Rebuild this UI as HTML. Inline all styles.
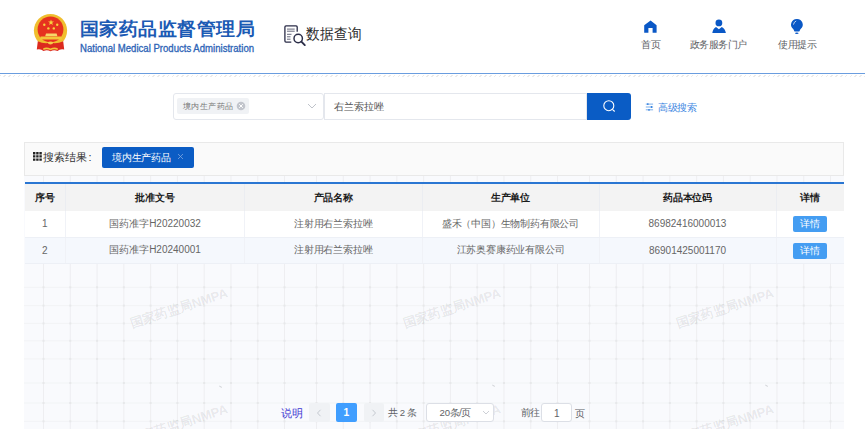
<!DOCTYPE html>
<html><head><meta charset="utf-8">
<style>
*{margin:0;padding:0;box-sizing:border-box}
html,body{width:865px;height:429px;overflow:hidden;background:#fff;font-family:"Liberation Sans",sans-serif;color:#606266}
.a{position:absolute;white-space:nowrap}
.hdr-line{position:absolute;left:0;top:72.6px;width:865px;height:1px;background:#6a9ddf}
.hatch{position:absolute;left:0;top:74.6px;width:865px;height:2.4px;background:repeating-linear-gradient(135deg,#ebebeb 0 1.1px,#fff 1.1px 3.4px)}
.title{left:79.5px;top:16.8px;font-size:19px;letter-spacing:0.55px;font-weight:bold;color:#1b5ab4;transform:scaleY(0.95);transform-origin:0 0}
.sub{left:80px;top:42.5px;font-size:10.3px;color:#2c63b6;transform-origin:0 0;transform:scaleX(0.93);-webkit-text-stroke:0.3px #2c63b6}
.nav{font-size:10px;color:#606266}
.grid{position:absolute;left:24px;top:176px;width:820px;height:253px;background-color:#f8f9fc;
 background-image:linear-gradient(to right,#eef0f3 1px,transparent 1px),linear-gradient(to bottom,#f0f1f4 1px,transparent 1px);
 background-size:26.8px 17.75px;background-position:19.3px 5.8px}
.wm{position:absolute;width:100px;height:16px;line-height:16px;text-align:center;font-size:12.9px;font-weight:bold;color:rgba(0,0,0,0.085);transform:rotate(-18deg);white-space:nowrap}
table{position:absolute;left:24.5px;top:183.5px;width:819.5px;border-collapse:collapse;font-size:10px;table-layout:fixed}
th{height:27.5px;padding-top:1.8px;letter-spacing:-0.2px;background:#f3f3f3;color:#1a1a1a;font-weight:bold;border-right:1px solid #ebedf1;text-align:center}
td{height:26.3px;text-align:center;color:#666;border-right:1px solid #f0f2f7;border-bottom:1px solid #edf0f6}
th:last-child,td:last-child{border-right:none}
tr.r2 td{background:#f5f8fd}
td:nth-child(3),td:nth-child(4){letter-spacing:-0.2px}
tr.r2 .btn{position:relative;top:0.7px}
.btn{margin-left:-1px}
tr.r1 td{background:#fff}
.btn{display:inline-block;width:34px;height:16px;line-height:16px;background:#449df2;color:#fff;border-radius:2px;font-size:10px;vertical-align:middle}
</style></head><body>

<!-- header -->
<svg class="a" style="left:32px;top:12px" width="38" height="41" viewBox="32 12 38 41">
 <circle cx="50.5" cy="30.6" r="16.6" fill="#f0be2e"/>
 <circle cx="50.5" cy="29.4" r="12.9" fill="#e6321f"/>
 <path d="M51 19.4 l0.75 2.05 2.2 0 -1.75 1.35 .65 2.1 -1.85 -1.25 -1.85 1.25 .65 -2.1 -1.75 -1.35 2.2 0z" fill="#f7d33e"/>
 <circle cx="44.3" cy="24.7" r="1.2" fill="#f7d33e"/>
 <circle cx="57.2" cy="24.7" r="1.2" fill="#f7d33e"/>
 <circle cx="48.4" cy="28.4" r="1.2" fill="#f7d33e"/>
 <circle cx="53.8" cy="28.4" r="1.2" fill="#f7d33e"/>
 <path d="M46 33.4 H56.6 L57.4 36.2 H45.2 Z" fill="#f6d66a"/>
 <path d="M40.6 36.6 H61.4 L62.2 39.4 H39.8 Z" fill="#f3c53a"/>
 <path d="M37.8 41.2 Q44 44.2 50.5 42.6 Q57 44.2 63.2 41.2 L64.2 49.5 Q60 48.6 57.5 51 Q54 49.6 50.5 51.2 Q47 49.6 43.5 51 Q41 48.6 36.8 49.5 Z" fill="#dc2a1e"/>
 <path d="M47.4 42.6 Q50.5 40.4 53.6 42.6 Q52.6 44.6 50.5 44.6 Q48.4 44.6 47.4 42.6Z" fill="#f5cc4a"/>
 <path d="M43 48.4 Q46.5 46.6 50.5 48.6 Q54.5 46.6 58 48.4 L57.5 50 Q54 48.6 50.5 50.2 Q47 48.6 43.5 50Z" fill="#f3c53a"/>
</svg>
<div class="a title">国家药品监督管理局</div>
<div class="a sub">National Medical Products Administration</div>

<svg class="a" style="left:283px;top:24px" width="24" height="23" viewBox="283 24 24 23">
 <path d="M297.2 31.8 V27 Q297.2 25.9 296.1 25.9 H286 Q284.9 25.9 284.9 27 V41 Q284.9 42.1 286 42.1 H291.3" fill="none" stroke="#2b2d48" stroke-width="1.3"/>
 <path d="M287 29.1 H294.7 M287 31.2 H294.7 M287 34.3 H291.5 M287 36.8 H290.5 M287 39.2 H290.5" stroke="#55576c" stroke-width="0.9"/>
 <circle cx="298.2" cy="38.5" r="4.2" fill="none" stroke="#2b2d48" stroke-width="1.45"/>
 <path d="M301.4 41.7 L304.8 45.1" stroke="#2b2d48" stroke-width="1.9" stroke-linecap="round"/>
</svg>
<div class="a" style="left:306px;top:24.5px;font-size:14px;letter-spacing:0.15px;color:#2a2a2a;transform:scaleY(1.1);transform-origin:0 0">数据查询</div>

<svg class="a" style="left:640px;top:18px" width="180" height="18" viewBox="640 18 180 18">
 <path d="M650.6 20.4 L656.6 25.3 V32.7 H652.6 V28.1 H648.4 V32.7 H644.2 V25.3 Z" fill="#0a58c6"/>
 <circle cx="718.9" cy="22.9" r="3.4" fill="#0a58c6"/>
 <path d="M712.3 33 Q713 28.5 716 27 L718.9 29.3 L721.8 27 Q725 28.5 725.9 33 Z" fill="#0a58c6"/>
 <path d="M796.9 19 A5.7 5.7 0 0 1 800.4 29.3 L799.3 31.6 H794.5 L793.4 29.3 A5.7 5.7 0 0 1 796.9 19Z" fill="#0a58c6"/>
 <ellipse cx="796.8" cy="33.3" rx="1.8" ry="0.7" fill="#0a58c6"/>
 <path d="M793.5 24.6 Q793.8 22 796.2 21" stroke="#fff" stroke-width="0.8" fill="none" opacity="0.9"/>
</svg>
<div class="a nav" style="left:641px;top:38px">首页</div>
<div class="a nav" style="left:690px;top:38px;letter-spacing:-0.55px">政务服务门户</div>
<div class="a nav" style="left:778px;top:38px;letter-spacing:-0.3px">使用提示</div>

<div class="hdr-line"></div>
<div class="hatch"></div>

<!-- search -->
<div class="a" style="left:173px;top:93px;width:151px;height:26.5px;border:1px solid #e4e7ed;border-radius:3px;background:#fff"></div>
<div class="a" style="left:177px;top:98px;width:72px;height:15.5px;background:#f0f2f5;border-radius:2px"></div>
<div class="a" style="left:182.5px;top:101.2px;font-size:8px;transform:scale(1.05);transform-origin:0 0;color:#777">境内生产药品</div>
<svg class="a" style="left:236px;top:100.5px" width="10" height="10" viewBox="0 0 10 10">
 <circle cx="5" cy="5" r="4.3" fill="#c2c5cc"/>
 <path d="M3.2 3.2 L6.8 6.8 M6.8 3.2 L3.2 6.8" stroke="#fff" stroke-width="1"/>
</svg>
<svg class="a" style="left:307px;top:103px" width="10" height="6" viewBox="0 0 10 6">
 <path d="M1 1 L5 5 L9 1" fill="none" stroke="#b8bcc4" stroke-width="0.9"/>
</svg>
<div class="a" style="left:324px;top:93px;width:263px;height:26.5px;border:1px solid #e4e7ed;border-left-color:#e4e7ed;background:#fff"></div>
<div class="a" style="left:334px;top:99.5px;font-size:10px;color:#555">右兰索拉唑</div>
<div class="a" style="left:587px;top:93px;width:43.5px;height:26.5px;background:#0a5cc5;border-radius:0 3px 3px 0"></div>
<svg class="a" style="left:600px;top:97px" width="18" height="18" viewBox="600 97 18 18">
 <circle cx="608.8" cy="105.7" r="5" fill="none" stroke="#fff" stroke-width="1.1"/>
 <path d="M612.4 109.3 L614.7 111.5" stroke="#fff" stroke-width="1.1"/>
</svg>
<svg class="a" style="left:644px;top:102px" width="11" height="10" viewBox="644 102 11 10">
 <path d="M645.8 104.1 H653.1 M645.8 107 H653.1 M645.8 109.8 H653.1" stroke="#5a9ae6" stroke-width="0.8"/>
 <path d="M647.8 103.2 V105 M651.5 106.1 V107.9 M649 108.9 V110.7" stroke="#3b86e0" stroke-width="1.4"/>
</svg>
<div class="a" style="left:658px;top:100.5px;font-size:10px;letter-spacing:-0.35px;color:#3f88e2">高级搜索</div>

<!-- results bar -->
<div class="a" style="left:24px;top:142px;width:820px;height:34px;background:#fafafa;border:1px solid #e9e9e9"></div>
<svg class="a" style="left:33px;top:152px" width="9" height="9" viewBox="0 0 9 9">
 <path d="M0 0h2.4v2.4H0z M3.2 0h2.4v2.4H3.2z M6.4 0h2.4v2.4H6.4z M0 3.2h2.4v2.4H0z M3.2 3.2h2.4v2.4H3.2z M6.4 3.2h2.4v2.4H6.4z M0 6.4h2.4v2.4H0z M3.2 6.4h2.4v2.4H3.2z M6.4 6.4h2.4v2.4H6.4z" fill="#222"/>
</svg>
<div class="a" style="left:43px;top:151px;font-size:10.8px;color:#333">搜索结果<span style="margin-left:1.5px">:</span></div>
<div class="a" style="left:101.5px;top:147px;width:92px;height:21px;background:#0b5cc4;border-radius:2px"></div>
<div class="a" style="left:112px;top:151.5px;font-size:9.6px;letter-spacing:-0.25px;color:#fff">境内生产药品</div>
<svg class="a" style="left:177px;top:152.5px" width="7" height="7" viewBox="0 0 7 7">
 <path d="M1 1 L6 6 M6 1 L1 6" stroke="#7fa6e0" stroke-width="0.8"/>
</svg>

<!-- grid bg -->
<svg class="a" style="left:24px;top:176px" width="820" height="253" viewBox="0 0 820 253"><rect x="0" y="0" width="820" height="253" fill="#f9fafd"/><rect x="19.00" y="0" width="1" height="253" fill="#eeeef1"/><rect x="45.78" y="0" width="1" height="253" fill="#eeeef1"/><rect x="72.56" y="0" width="1" height="253" fill="#eeeef1"/><rect x="99.34" y="0" width="1" height="253" fill="#eeeef1"/><rect x="126.12" y="0" width="1" height="253" fill="#eeeef1"/><rect x="152.90" y="0" width="1" height="253" fill="#eeeef1"/><rect x="179.68" y="0" width="1" height="253" fill="#eeeef1"/><rect x="206.46" y="0" width="1" height="253" fill="#eeeef1"/><rect x="233.24" y="0" width="1" height="253" fill="#eeeef1"/><rect x="260.02" y="0" width="1" height="253" fill="#eeeef1"/><rect x="292.00" y="0" width="1" height="253" fill="#eeeef1"/><rect x="318.78" y="0" width="1" height="253" fill="#eeeef1"/><rect x="345.56" y="0" width="1" height="253" fill="#eeeef1"/><rect x="372.34" y="0" width="1" height="253" fill="#eeeef1"/><rect x="399.12" y="0" width="1" height="253" fill="#eeeef1"/><rect x="425.90" y="0" width="1" height="253" fill="#eeeef1"/><rect x="452.68" y="0" width="1" height="253" fill="#eeeef1"/><rect x="479.46" y="0" width="1" height="253" fill="#eeeef1"/><rect x="506.24" y="0" width="1" height="253" fill="#eeeef1"/><rect x="533.02" y="0" width="1" height="253" fill="#eeeef1"/><rect x="565.00" y="0" width="1" height="253" fill="#eeeef1"/><rect x="591.78" y="0" width="1" height="253" fill="#eeeef1"/><rect x="618.56" y="0" width="1" height="253" fill="#eeeef1"/><rect x="645.34" y="0" width="1" height="253" fill="#eeeef1"/><rect x="672.12" y="0" width="1" height="253" fill="#eeeef1"/><rect x="698.90" y="0" width="1" height="253" fill="#eeeef1"/><rect x="725.68" y="0" width="1" height="253" fill="#eeeef1"/><rect x="752.46" y="0" width="1" height="253" fill="#eeeef1"/><rect x="779.24" y="0" width="1" height="253" fill="#eeeef1"/><rect x="806.02" y="0" width="1" height="253" fill="#eeeef1"/><rect x="0" y="110.80" width="820" height="1" fill="#f2f3f5"/><rect x="0" y="129.10" width="820" height="1" fill="#f2f3f5"/><rect x="0" y="146.90" width="820" height="1" fill="#f2f3f5"/><rect x="0" y="164.30" width="820" height="1" fill="#f2f3f5"/><rect x="0" y="182.40" width="820" height="1" fill="#f2f3f5"/><rect x="0" y="206.50" width="820" height="1" fill="#f2f3f5"/><rect x="0" y="226.50" width="820" height="1" fill="#f2f3f5"/><rect x="0" y="244.80" width="820" height="1" fill="#f2f3f5"/><rect x="18.50" y="110.30" width="2" height="2" fill="#e7e8ea"/><rect x="18.50" y="128.60" width="2" height="2" fill="#e7e8ea"/><rect x="18.50" y="146.40" width="2" height="2" fill="#e7e8ea"/><rect x="18.50" y="163.80" width="2" height="2" fill="#e7e8ea"/><rect x="18.50" y="181.90" width="2" height="2" fill="#e7e8ea"/><rect x="18.50" y="206.00" width="2" height="2" fill="#e7e8ea"/><rect x="18.50" y="226.00" width="2" height="2" fill="#e7e8ea"/><rect x="18.50" y="244.30" width="2" height="2" fill="#e7e8ea"/><rect x="45.28" y="110.30" width="2" height="2" fill="#e7e8ea"/><rect x="45.28" y="128.60" width="2" height="2" fill="#e7e8ea"/><rect x="45.28" y="146.40" width="2" height="2" fill="#e7e8ea"/><rect x="45.28" y="163.80" width="2" height="2" fill="#e7e8ea"/><rect x="45.28" y="181.90" width="2" height="2" fill="#e7e8ea"/><rect x="45.28" y="206.00" width="2" height="2" fill="#e7e8ea"/><rect x="45.28" y="226.00" width="2" height="2" fill="#e7e8ea"/><rect x="45.28" y="244.30" width="2" height="2" fill="#e7e8ea"/><rect x="72.06" y="110.30" width="2" height="2" fill="#e7e8ea"/><rect x="72.06" y="128.60" width="2" height="2" fill="#e7e8ea"/><rect x="72.06" y="146.40" width="2" height="2" fill="#e7e8ea"/><rect x="72.06" y="163.80" width="2" height="2" fill="#e7e8ea"/><rect x="72.06" y="181.90" width="2" height="2" fill="#e7e8ea"/><rect x="72.06" y="206.00" width="2" height="2" fill="#e7e8ea"/><rect x="72.06" y="226.00" width="2" height="2" fill="#e7e8ea"/><rect x="72.06" y="244.30" width="2" height="2" fill="#e7e8ea"/><rect x="98.84" y="110.30" width="2" height="2" fill="#e7e8ea"/><rect x="98.84" y="128.60" width="2" height="2" fill="#e7e8ea"/><rect x="98.84" y="146.40" width="2" height="2" fill="#e7e8ea"/><rect x="98.84" y="163.80" width="2" height="2" fill="#e7e8ea"/><rect x="98.84" y="181.90" width="2" height="2" fill="#e7e8ea"/><rect x="98.84" y="206.00" width="2" height="2" fill="#e7e8ea"/><rect x="98.84" y="226.00" width="2" height="2" fill="#e7e8ea"/><rect x="98.84" y="244.30" width="2" height="2" fill="#e7e8ea"/><rect x="125.62" y="110.30" width="2" height="2" fill="#e7e8ea"/><rect x="125.62" y="128.60" width="2" height="2" fill="#e7e8ea"/><rect x="125.62" y="146.40" width="2" height="2" fill="#e7e8ea"/><rect x="125.62" y="163.80" width="2" height="2" fill="#e7e8ea"/><rect x="125.62" y="181.90" width="2" height="2" fill="#e7e8ea"/><rect x="125.62" y="206.00" width="2" height="2" fill="#e7e8ea"/><rect x="125.62" y="226.00" width="2" height="2" fill="#e7e8ea"/><rect x="125.62" y="244.30" width="2" height="2" fill="#e7e8ea"/><rect x="152.40" y="110.30" width="2" height="2" fill="#e7e8ea"/><rect x="152.40" y="128.60" width="2" height="2" fill="#e7e8ea"/><rect x="152.40" y="146.40" width="2" height="2" fill="#e7e8ea"/><rect x="152.40" y="163.80" width="2" height="2" fill="#e7e8ea"/><rect x="152.40" y="181.90" width="2" height="2" fill="#e7e8ea"/><rect x="152.40" y="206.00" width="2" height="2" fill="#e7e8ea"/><rect x="152.40" y="226.00" width="2" height="2" fill="#e7e8ea"/><rect x="152.40" y="244.30" width="2" height="2" fill="#e7e8ea"/><rect x="179.18" y="110.30" width="2" height="2" fill="#e7e8ea"/><rect x="179.18" y="128.60" width="2" height="2" fill="#e7e8ea"/><rect x="179.18" y="146.40" width="2" height="2" fill="#e7e8ea"/><rect x="179.18" y="163.80" width="2" height="2" fill="#e7e8ea"/><rect x="179.18" y="181.90" width="2" height="2" fill="#e7e8ea"/><rect x="179.18" y="206.00" width="2" height="2" fill="#e7e8ea"/><rect x="179.18" y="226.00" width="2" height="2" fill="#e7e8ea"/><rect x="179.18" y="244.30" width="2" height="2" fill="#e7e8ea"/><rect x="205.96" y="110.30" width="2" height="2" fill="#e7e8ea"/><rect x="205.96" y="128.60" width="2" height="2" fill="#e7e8ea"/><rect x="205.96" y="146.40" width="2" height="2" fill="#e7e8ea"/><rect x="205.96" y="163.80" width="2" height="2" fill="#e7e8ea"/><rect x="205.96" y="181.90" width="2" height="2" fill="#e7e8ea"/><rect x="205.96" y="206.00" width="2" height="2" fill="#e7e8ea"/><rect x="205.96" y="226.00" width="2" height="2" fill="#e7e8ea"/><rect x="205.96" y="244.30" width="2" height="2" fill="#e7e8ea"/><rect x="232.74" y="110.30" width="2" height="2" fill="#e7e8ea"/><rect x="232.74" y="128.60" width="2" height="2" fill="#e7e8ea"/><rect x="232.74" y="146.40" width="2" height="2" fill="#e7e8ea"/><rect x="232.74" y="163.80" width="2" height="2" fill="#e7e8ea"/><rect x="232.74" y="181.90" width="2" height="2" fill="#e7e8ea"/><rect x="232.74" y="206.00" width="2" height="2" fill="#e7e8ea"/><rect x="232.74" y="226.00" width="2" height="2" fill="#e7e8ea"/><rect x="232.74" y="244.30" width="2" height="2" fill="#e7e8ea"/><rect x="259.52" y="110.30" width="2" height="2" fill="#e7e8ea"/><rect x="259.52" y="128.60" width="2" height="2" fill="#e7e8ea"/><rect x="259.52" y="146.40" width="2" height="2" fill="#e7e8ea"/><rect x="259.52" y="163.80" width="2" height="2" fill="#e7e8ea"/><rect x="259.52" y="181.90" width="2" height="2" fill="#e7e8ea"/><rect x="259.52" y="206.00" width="2" height="2" fill="#e7e8ea"/><rect x="259.52" y="226.00" width="2" height="2" fill="#e7e8ea"/><rect x="259.52" y="244.30" width="2" height="2" fill="#e7e8ea"/><rect x="291.50" y="110.30" width="2" height="2" fill="#e7e8ea"/><rect x="291.50" y="128.60" width="2" height="2" fill="#e7e8ea"/><rect x="291.50" y="146.40" width="2" height="2" fill="#e7e8ea"/><rect x="291.50" y="163.80" width="2" height="2" fill="#e7e8ea"/><rect x="291.50" y="181.90" width="2" height="2" fill="#e7e8ea"/><rect x="291.50" y="206.00" width="2" height="2" fill="#e7e8ea"/><rect x="291.50" y="226.00" width="2" height="2" fill="#e7e8ea"/><rect x="291.50" y="244.30" width="2" height="2" fill="#e7e8ea"/><rect x="318.28" y="110.30" width="2" height="2" fill="#e7e8ea"/><rect x="318.28" y="128.60" width="2" height="2" fill="#e7e8ea"/><rect x="318.28" y="146.40" width="2" height="2" fill="#e7e8ea"/><rect x="318.28" y="163.80" width="2" height="2" fill="#e7e8ea"/><rect x="318.28" y="181.90" width="2" height="2" fill="#e7e8ea"/><rect x="318.28" y="206.00" width="2" height="2" fill="#e7e8ea"/><rect x="318.28" y="226.00" width="2" height="2" fill="#e7e8ea"/><rect x="318.28" y="244.30" width="2" height="2" fill="#e7e8ea"/><rect x="345.06" y="110.30" width="2" height="2" fill="#e7e8ea"/><rect x="345.06" y="128.60" width="2" height="2" fill="#e7e8ea"/><rect x="345.06" y="146.40" width="2" height="2" fill="#e7e8ea"/><rect x="345.06" y="163.80" width="2" height="2" fill="#e7e8ea"/><rect x="345.06" y="181.90" width="2" height="2" fill="#e7e8ea"/><rect x="345.06" y="206.00" width="2" height="2" fill="#e7e8ea"/><rect x="345.06" y="226.00" width="2" height="2" fill="#e7e8ea"/><rect x="345.06" y="244.30" width="2" height="2" fill="#e7e8ea"/><rect x="371.84" y="110.30" width="2" height="2" fill="#e7e8ea"/><rect x="371.84" y="128.60" width="2" height="2" fill="#e7e8ea"/><rect x="371.84" y="146.40" width="2" height="2" fill="#e7e8ea"/><rect x="371.84" y="163.80" width="2" height="2" fill="#e7e8ea"/><rect x="371.84" y="181.90" width="2" height="2" fill="#e7e8ea"/><rect x="371.84" y="206.00" width="2" height="2" fill="#e7e8ea"/><rect x="371.84" y="226.00" width="2" height="2" fill="#e7e8ea"/><rect x="371.84" y="244.30" width="2" height="2" fill="#e7e8ea"/><rect x="398.62" y="110.30" width="2" height="2" fill="#e7e8ea"/><rect x="398.62" y="128.60" width="2" height="2" fill="#e7e8ea"/><rect x="398.62" y="146.40" width="2" height="2" fill="#e7e8ea"/><rect x="398.62" y="163.80" width="2" height="2" fill="#e7e8ea"/><rect x="398.62" y="181.90" width="2" height="2" fill="#e7e8ea"/><rect x="398.62" y="206.00" width="2" height="2" fill="#e7e8ea"/><rect x="398.62" y="226.00" width="2" height="2" fill="#e7e8ea"/><rect x="398.62" y="244.30" width="2" height="2" fill="#e7e8ea"/><rect x="425.40" y="110.30" width="2" height="2" fill="#e7e8ea"/><rect x="425.40" y="128.60" width="2" height="2" fill="#e7e8ea"/><rect x="425.40" y="146.40" width="2" height="2" fill="#e7e8ea"/><rect x="425.40" y="163.80" width="2" height="2" fill="#e7e8ea"/><rect x="425.40" y="181.90" width="2" height="2" fill="#e7e8ea"/><rect x="425.40" y="206.00" width="2" height="2" fill="#e7e8ea"/><rect x="425.40" y="226.00" width="2" height="2" fill="#e7e8ea"/><rect x="425.40" y="244.30" width="2" height="2" fill="#e7e8ea"/><rect x="452.18" y="110.30" width="2" height="2" fill="#e7e8ea"/><rect x="452.18" y="128.60" width="2" height="2" fill="#e7e8ea"/><rect x="452.18" y="146.40" width="2" height="2" fill="#e7e8ea"/><rect x="452.18" y="163.80" width="2" height="2" fill="#e7e8ea"/><rect x="452.18" y="181.90" width="2" height="2" fill="#e7e8ea"/><rect x="452.18" y="206.00" width="2" height="2" fill="#e7e8ea"/><rect x="452.18" y="226.00" width="2" height="2" fill="#e7e8ea"/><rect x="452.18" y="244.30" width="2" height="2" fill="#e7e8ea"/><rect x="478.96" y="110.30" width="2" height="2" fill="#e7e8ea"/><rect x="478.96" y="128.60" width="2" height="2" fill="#e7e8ea"/><rect x="478.96" y="146.40" width="2" height="2" fill="#e7e8ea"/><rect x="478.96" y="163.80" width="2" height="2" fill="#e7e8ea"/><rect x="478.96" y="181.90" width="2" height="2" fill="#e7e8ea"/><rect x="478.96" y="206.00" width="2" height="2" fill="#e7e8ea"/><rect x="478.96" y="226.00" width="2" height="2" fill="#e7e8ea"/><rect x="478.96" y="244.30" width="2" height="2" fill="#e7e8ea"/><rect x="505.74" y="110.30" width="2" height="2" fill="#e7e8ea"/><rect x="505.74" y="128.60" width="2" height="2" fill="#e7e8ea"/><rect x="505.74" y="146.40" width="2" height="2" fill="#e7e8ea"/><rect x="505.74" y="163.80" width="2" height="2" fill="#e7e8ea"/><rect x="505.74" y="181.90" width="2" height="2" fill="#e7e8ea"/><rect x="505.74" y="206.00" width="2" height="2" fill="#e7e8ea"/><rect x="505.74" y="226.00" width="2" height="2" fill="#e7e8ea"/><rect x="505.74" y="244.30" width="2" height="2" fill="#e7e8ea"/><rect x="532.52" y="110.30" width="2" height="2" fill="#e7e8ea"/><rect x="532.52" y="128.60" width="2" height="2" fill="#e7e8ea"/><rect x="532.52" y="146.40" width="2" height="2" fill="#e7e8ea"/><rect x="532.52" y="163.80" width="2" height="2" fill="#e7e8ea"/><rect x="532.52" y="181.90" width="2" height="2" fill="#e7e8ea"/><rect x="532.52" y="206.00" width="2" height="2" fill="#e7e8ea"/><rect x="532.52" y="226.00" width="2" height="2" fill="#e7e8ea"/><rect x="532.52" y="244.30" width="2" height="2" fill="#e7e8ea"/><rect x="564.50" y="110.30" width="2" height="2" fill="#e7e8ea"/><rect x="564.50" y="128.60" width="2" height="2" fill="#e7e8ea"/><rect x="564.50" y="146.40" width="2" height="2" fill="#e7e8ea"/><rect x="564.50" y="163.80" width="2" height="2" fill="#e7e8ea"/><rect x="564.50" y="181.90" width="2" height="2" fill="#e7e8ea"/><rect x="564.50" y="206.00" width="2" height="2" fill="#e7e8ea"/><rect x="564.50" y="226.00" width="2" height="2" fill="#e7e8ea"/><rect x="564.50" y="244.30" width="2" height="2" fill="#e7e8ea"/><rect x="591.28" y="110.30" width="2" height="2" fill="#e7e8ea"/><rect x="591.28" y="128.60" width="2" height="2" fill="#e7e8ea"/><rect x="591.28" y="146.40" width="2" height="2" fill="#e7e8ea"/><rect x="591.28" y="163.80" width="2" height="2" fill="#e7e8ea"/><rect x="591.28" y="181.90" width="2" height="2" fill="#e7e8ea"/><rect x="591.28" y="206.00" width="2" height="2" fill="#e7e8ea"/><rect x="591.28" y="226.00" width="2" height="2" fill="#e7e8ea"/><rect x="591.28" y="244.30" width="2" height="2" fill="#e7e8ea"/><rect x="618.06" y="110.30" width="2" height="2" fill="#e7e8ea"/><rect x="618.06" y="128.60" width="2" height="2" fill="#e7e8ea"/><rect x="618.06" y="146.40" width="2" height="2" fill="#e7e8ea"/><rect x="618.06" y="163.80" width="2" height="2" fill="#e7e8ea"/><rect x="618.06" y="181.90" width="2" height="2" fill="#e7e8ea"/><rect x="618.06" y="206.00" width="2" height="2" fill="#e7e8ea"/><rect x="618.06" y="226.00" width="2" height="2" fill="#e7e8ea"/><rect x="618.06" y="244.30" width="2" height="2" fill="#e7e8ea"/><rect x="644.84" y="110.30" width="2" height="2" fill="#e7e8ea"/><rect x="644.84" y="128.60" width="2" height="2" fill="#e7e8ea"/><rect x="644.84" y="146.40" width="2" height="2" fill="#e7e8ea"/><rect x="644.84" y="163.80" width="2" height="2" fill="#e7e8ea"/><rect x="644.84" y="181.90" width="2" height="2" fill="#e7e8ea"/><rect x="644.84" y="206.00" width="2" height="2" fill="#e7e8ea"/><rect x="644.84" y="226.00" width="2" height="2" fill="#e7e8ea"/><rect x="644.84" y="244.30" width="2" height="2" fill="#e7e8ea"/><rect x="671.62" y="110.30" width="2" height="2" fill="#e7e8ea"/><rect x="671.62" y="128.60" width="2" height="2" fill="#e7e8ea"/><rect x="671.62" y="146.40" width="2" height="2" fill="#e7e8ea"/><rect x="671.62" y="163.80" width="2" height="2" fill="#e7e8ea"/><rect x="671.62" y="181.90" width="2" height="2" fill="#e7e8ea"/><rect x="671.62" y="206.00" width="2" height="2" fill="#e7e8ea"/><rect x="671.62" y="226.00" width="2" height="2" fill="#e7e8ea"/><rect x="671.62" y="244.30" width="2" height="2" fill="#e7e8ea"/><rect x="698.40" y="110.30" width="2" height="2" fill="#e7e8ea"/><rect x="698.40" y="128.60" width="2" height="2" fill="#e7e8ea"/><rect x="698.40" y="146.40" width="2" height="2" fill="#e7e8ea"/><rect x="698.40" y="163.80" width="2" height="2" fill="#e7e8ea"/><rect x="698.40" y="181.90" width="2" height="2" fill="#e7e8ea"/><rect x="698.40" y="206.00" width="2" height="2" fill="#e7e8ea"/><rect x="698.40" y="226.00" width="2" height="2" fill="#e7e8ea"/><rect x="698.40" y="244.30" width="2" height="2" fill="#e7e8ea"/><rect x="725.18" y="110.30" width="2" height="2" fill="#e7e8ea"/><rect x="725.18" y="128.60" width="2" height="2" fill="#e7e8ea"/><rect x="725.18" y="146.40" width="2" height="2" fill="#e7e8ea"/><rect x="725.18" y="163.80" width="2" height="2" fill="#e7e8ea"/><rect x="725.18" y="181.90" width="2" height="2" fill="#e7e8ea"/><rect x="725.18" y="206.00" width="2" height="2" fill="#e7e8ea"/><rect x="725.18" y="226.00" width="2" height="2" fill="#e7e8ea"/><rect x="725.18" y="244.30" width="2" height="2" fill="#e7e8ea"/><rect x="751.96" y="110.30" width="2" height="2" fill="#e7e8ea"/><rect x="751.96" y="128.60" width="2" height="2" fill="#e7e8ea"/><rect x="751.96" y="146.40" width="2" height="2" fill="#e7e8ea"/><rect x="751.96" y="163.80" width="2" height="2" fill="#e7e8ea"/><rect x="751.96" y="181.90" width="2" height="2" fill="#e7e8ea"/><rect x="751.96" y="206.00" width="2" height="2" fill="#e7e8ea"/><rect x="751.96" y="226.00" width="2" height="2" fill="#e7e8ea"/><rect x="751.96" y="244.30" width="2" height="2" fill="#e7e8ea"/><rect x="778.74" y="110.30" width="2" height="2" fill="#e7e8ea"/><rect x="778.74" y="128.60" width="2" height="2" fill="#e7e8ea"/><rect x="778.74" y="146.40" width="2" height="2" fill="#e7e8ea"/><rect x="778.74" y="163.80" width="2" height="2" fill="#e7e8ea"/><rect x="778.74" y="181.90" width="2" height="2" fill="#e7e8ea"/><rect x="778.74" y="206.00" width="2" height="2" fill="#e7e8ea"/><rect x="778.74" y="226.00" width="2" height="2" fill="#e7e8ea"/><rect x="778.74" y="244.30" width="2" height="2" fill="#e7e8ea"/><rect x="805.52" y="110.30" width="2" height="2" fill="#e7e8ea"/><rect x="805.52" y="128.60" width="2" height="2" fill="#e7e8ea"/><rect x="805.52" y="146.40" width="2" height="2" fill="#e7e8ea"/><rect x="805.52" y="163.80" width="2" height="2" fill="#e7e8ea"/><rect x="805.52" y="181.90" width="2" height="2" fill="#e7e8ea"/><rect x="805.52" y="206.00" width="2" height="2" fill="#e7e8ea"/><rect x="805.52" y="226.00" width="2" height="2" fill="#e7e8ea"/><rect x="805.52" y="244.30" width="2" height="2" fill="#e7e8ea"/></svg>

<div class="wm" style="left:128px;top:300.6px">国家药监局NMPA</div>
<div class="wm" style="left:401px;top:300.6px">国家药监局NMPA</div>
<div class="wm" style="left:674px;top:300.6px">国家药监局NMPA</div>
<div class="wm" style="left:128px;top:416.6px">国家药监局NMPA</div>
<div class="wm" style="left:401px;top:416.6px">国家药监局NMPA</div>
<div class="wm" style="left:674px;top:416.6px">国家药监局NMPA</div>

<div class="a" style="left:219px;top:386px;width:2.5px;height:1.2px;background:#d4d6da;transform:rotate(35deg)"></div><div class="a" style="left:492px;top:385px;width:2.5px;height:1.2px;background:#d4d6da;transform:rotate(35deg)"></div><div class="a" style="left:765px;top:385px;width:2.5px;height:1.2px;background:#d4d6da;transform:rotate(35deg)"></div>
<!-- table -->
<div class="a" style="left:24.5px;top:182.4px;width:819.5px;height:1.6px;background:#2a76d2"></div>
<table>
<colgroup><col style="width:41px"><col style="width:179px"><col style="width:177.5px"><col style="width:177px"><col style="width:177px"><col></colgroup>
<tr><th>序号</th><th>批准文号</th><th>产品名称</th><th>生产单位</th><th>药品本位码</th><th>详情</th></tr>
<tr class="r1"><td>1</td><td>国药准字H20220032</td><td>注射用右兰索拉唑</td><td>盛禾（中国）生物制药有限公司</td><td>86982416000013</td><td><span class="btn">详情</span></td></tr>
<tr class="r2"><td>2</td><td>国药准字H20240001</td><td>注射用右兰索拉唑</td><td>江苏奥赛康药业有限公司</td><td>86901425001170</td><td><span class="btn">详情</span></td></tr>
</table>

<!-- pagination -->
<div class="a" style="left:280.5px;top:405.5px;font-size:11px;color:#3d36d2">说明</div>
<div class="a" style="left:309px;top:403px;width:21px;height:18.5px;background:#f0f2f5;border-radius:2px"></div>
<svg class="a" style="left:316px;top:409px" width="6" height="8" viewBox="0 0 6 8"><path d="M4.5 0.8 L1.5 4 L4.5 7.2" fill="none" stroke="#c0c4cc" stroke-width="0.9"/></svg>
<div class="a" style="left:336px;top:403px;width:21px;height:18.5px;background:#409eff;border-radius:2px"></div>
<div class="a" style="left:343.5px;top:407.3px;font-size:10.3px;font-weight:bold;color:#fff">1</div>
<div class="a" style="left:364px;top:403px;width:20px;height:18.5px;background:#f0f2f5;border-radius:2px"></div>
<svg class="a" style="left:371px;top:409px" width="6" height="8" viewBox="0 0 6 8"><path d="M1.5 0.8 L4.5 4 L1.5 7.2" fill="none" stroke="#c0c4cc" stroke-width="0.9"/></svg>
<div class="a" style="left:387.5px;top:406.5px;font-size:9.6px;letter-spacing:-0.25px;color:#606266">共 2 条</div>
<div class="a" style="left:426px;top:403px;width:68px;height:19px;border:1px solid #dcdfe6;border-radius:3px;background:#fff"></div>
<div class="a" style="left:439.5px;top:406.5px;font-size:9.6px;color:#606266">20<span style="letter-spacing:-1.1px">条/</span>页</div>
<svg class="a" style="left:482px;top:410px" width="8" height="5" viewBox="0 0 8 5"><path d="M1 1 L4 4 L7 1" fill="none" stroke="#c0c4cc" stroke-width="0.8"/></svg>
<div class="a" style="left:520.8px;top:406.5px;font-size:9.5px;letter-spacing:-0.7px;color:#606266">前往</div>
<div class="a" style="left:541.2px;top:403.3px;width:31.3px;height:19.1px;border:1px solid #dcdfe6;border-radius:3px;background:#fff"></div>
<div class="a" style="left:554px;top:407.5px;font-size:10px;color:#606266">1</div>
<div class="a" style="left:575px;top:406.5px;font-size:10px;color:#606266">页</div>

</body></html>
